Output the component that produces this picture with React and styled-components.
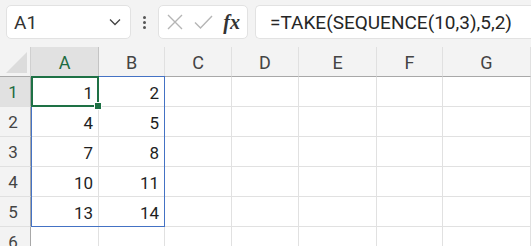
import React from "react";
import styled, { createGlobalStyle } from "styled-components";

const GlobalStyle = createGlobalStyle`
    html, body {
        margin: 0;
        padding: 0;
        background: #f3f3f3;
        overflow: hidden;
    }
    body {
        font-family: Roboto, "Noto Sans CJK JP", sans-serif;
        color: #262626;
    }
`;

const COLUMNS = ["A", "B", "C", "D", "E", "F", "G"];
// row header + A..F, G takes the rest
const WIDTHS = [31, 68, 66, 67, 67, 78, 66];
const ROWS = [1, 2, 3, 4, 5, 6];
const DATA = [
    [1, 2],
    [4, 5],
    [7, 8],
    [10, 11],
    [13, 14],
];

const Page = styled.div`
    width: 531px;
    height: 246px;
    overflow: hidden;
    display: flex;
    flex-direction: column;
`;

const Toolbar = styled.div`
    height: 47px;
    flex-shrink: 0;
    box-sizing: border-box;
    padding: 5px 0 0 6px;
    display: flex;
    align-items: flex-start;
    background: #f3f3f3;
    overflow: hidden;
`;

const Box = styled.div`
    height: 34px;
    flex-shrink: 0;
    box-sizing: border-box;
    background: #ffffff;
    border: 1px solid #e2e2e2;
    border-radius: 5px;
    display: flex;
    align-items: center;
`;

const NameBox = styled(Box)`
    width: 125px;
    padding: 0 9px 0 7px;
    justify-content: space-between;
    font-size: 19px;
    color: #333;
`;

const Dots = styled.div`
    width: 27px;
    height: 34px;
    flex-shrink: 0;
    display: flex;
    flex-direction: column;
    align-items: center;
    justify-content: center;
    gap: 2px;

    span {
        width: 3px;
        height: 3px;
        border-radius: 50%;
        background: #555;
    }
`;

const FxBox = styled(Box)`
    width: 90px;
    padding: 0 5px 0 7px;
    justify-content: space-between;
`;

const Fx = styled.span`
    font-family: "Liberation Serif", "DejaVu Serif", serif;
    font-style: italic;
    font-weight: bold;
    font-size: 20px;
    color: #333;
    padding-right: 2px;
`;

const FormulaBar = styled(Box)`
    margin-left: 7px;
    width: 300px;
    border-right: none;
    border-radius: 5px 0 0 5px;
    padding-left: 14px;
    font-size: 19px;
    color: #262626;
    white-space: nowrap;
`;

const Grid = styled.div`
    display: grid;
    grid-template-columns: ${WIDTHS.map((w) => w + "px").join(" ")} 1fr;
    grid-template-rows: repeat(7, 30px);
    background: #ffffff;
`;

const Slot = styled.div`
    grid-row: ${(p) => p.$row};
    grid-column: ${(p) => p.$col};
    box-sizing: border-box;
`;

const Corner = styled(Slot)`
    background: #f3f3f3;
    border-bottom: 1px solid #a8a8a8;
    border-right: 1px solid #d0d0d0;
    position: relative;

    &::after {
        content: "";
        position: absolute;
        right: 3px;
        bottom: 3px;
        width: 0;
        height: 0;
        border-left: 21px solid transparent;
        border-bottom: 21px solid #dcdcdc;
    }
`;

const ColHead = styled(Slot)`
    background: ${(p) => (p.$active ? "#e1e1e1" : "#f3f3f3")};
    color: ${(p) => (p.$active ? "#1d6b40" : "#444")};
    border-bottom: 1px solid #a8a8a8;
    border-right: 1px solid ${(p) => (p.$active ? "#c4c4c4" : "#e0e0e0")};
    display: flex;
    align-items: center;
    justify-content: center;
    padding-top: 1px;
    font-size: 18px;
`;

const RowHead = styled(Slot)`
    background: ${(p) => (p.$active ? "#e1e1e1" : "#f3f3f3")};
    color: ${(p) => (p.$active ? "#1d6b40" : "#444")};
    border-bottom: 1px solid #e0e0e0;
    border-right: 1px solid #a8a8a8;
    display: flex;
    align-items: center;
    justify-content: center;
    padding: 1px 4px 0 0;
    font-size: 17px;
`;

const Cell = styled(Slot)`
    border-bottom: 1px solid #e1e1e1;
    border-right: 1px solid #e1e1e1;
    display: flex;
    align-items: center;
    justify-content: flex-end;
    padding: 2px 5px 0 0;
    font-size: 17px;
    color: #1f1f1f;
`;

const Spill = styled.div`
    grid-column: 2 / 4;
    grid-row: 2 / 7;
    border: 1px solid #4472c4;
    margin: -1px 0 0 0;
    pointer-events: none;
    box-sizing: border-box;
`;

const Active = styled.div`
    grid-column: 2;
    grid-row: 2;
    border: 2px solid #1e7145;
    margin: -1px 0 0 0;
    pointer-events: none;
    position: relative;
    box-sizing: border-box;
`;

const Handle = styled.span`
    position: absolute;
    right: -5px;
    bottom: -5px;
    width: 6px;
    height: 6px;
    background: #1e7145;
    border: 1px solid #fff;
`;

const Cross = () => (
    <svg width="18" height="18" viewBox="0 0 18 18" fill="none" stroke="#b5b5b5" strokeWidth="1.4">
        <path d="M2 2 L16 16 M16 2 L2 16" />
    </svg>
);

const Check = () => (
    <svg width="19" height="16" viewBox="0 0 19 16" fill="none" stroke="#b5b5b5" strokeWidth="1.4">
        <path d="M1 8.5 L6.5 14 L18 2" />
    </svg>
);

const Chevron = () => (
    <svg width="12" height="8" viewBox="0 0 12 8" fill="none" stroke="#444" strokeWidth="1.3">
        <path d="M1 1.5 L6 6.5 L11 1.5" />
    </svg>
);

export default function App() {
    return (
        <Page>
            <GlobalStyle />
            <Toolbar>
                <NameBox>
                    <span>A1</span>
                    <Chevron />
                </NameBox>
                <Dots>
                    <span />
                    <span />
                    <span />
                </Dots>
                <FxBox>
                    <Cross />
                    <Check />
                    <Fx>fx</Fx>
                </FxBox>
                <FormulaBar>=TAKE(SEQUENCE(10,3),5,2)</FormulaBar>
            </Toolbar>
            <Grid>
                <Corner $row={1} $col={1} />
                {COLUMNS.map((c, i) => (
                    <ColHead key={c} $row={1} $col={i + 2} $active={c === "A"}>{c}</ColHead>
                ))}
                {ROWS.map((r) => (
                    <React.Fragment key={r}>
                        <RowHead $row={r + 1} $col={1} $active={r === 1}>{r}</RowHead>
                        {COLUMNS.map((c, i) => (
                            <Cell key={c} $row={r + 1} $col={i + 2}>
                                {DATA[r - 1] && i < 2 ? DATA[r - 1][i] : ""}
                            </Cell>
                        ))}
                    </React.Fragment>
                ))}
                <Spill />
                <Active>
                    <Handle />
                </Active>
            </Grid>
        </Page>
    );
}
